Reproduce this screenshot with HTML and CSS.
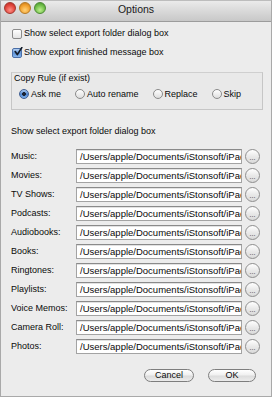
FILE: index.html
```html
<!DOCTYPE html>
<html>
<head>
<meta charset="utf-8">
<link rel="stylesheet" href="styles.css">
</head>
<body>
<div class="window">
  <div class="titlebar">
    <div class="lights">
      <span class="light red"></span>
      <span class="light orange"></span>
      <span class="light green"></span>
    </div>
    <div class="title">Options</div>
    <div></div>
  </div>
  <div class="content">
    <label class="check-row"><span class="check"></span><span>Show select export folder dialog box</span></label>
    <label class="check-row"><span class="check on"><svg viewBox="0 0 10 10" width="10" height="10"><path d="M2.2 4.6 L4.3 7.6 L8.8 0.6" fill="none" stroke="#141c28" stroke-width="1.7" stroke-linecap="round" stroke-linejoin="round"/></svg></span><span>Show export finished message box</span></label>

    <div class="group">
      <div class="group-title">Copy Rule (if exist)</div>
      <div class="radios">
        <span class="radio-item"><span class="radio on"></span>Ask me</span>
        <span class="radio-item"><span class="radio"></span>Auto rename</span>
        <span class="radio-item"><span class="radio"></span>Replace</span>
        <span class="radio-item"><span class="radio"></span>Skip</span>
      </div>
    </div>

    <div class="section-label">Show select export folder dialog box</div>

    <div class="rows">
      <div class="row"><span class="row-label">Music:</span><span class="field">/Users/apple/Documents/iStonsoft/iPad</span><span class="browse">...</span></div>
      <div class="row"><span class="row-label">Movies:</span><span class="field">/Users/apple/Documents/iStonsoft/iPad</span><span class="browse">...</span></div>
      <div class="row"><span class="row-label">TV Shows:</span><span class="field">/Users/apple/Documents/iStonsoft/iPad</span><span class="browse">...</span></div>
      <div class="row"><span class="row-label">Podcasts:</span><span class="field">/Users/apple/Documents/iStonsoft/iPad</span><span class="browse">...</span></div>
      <div class="row"><span class="row-label">Audiobooks:</span><span class="field">/Users/apple/Documents/iStonsoft/iPad</span><span class="browse">...</span></div>
      <div class="row"><span class="row-label">Books:</span><span class="field">/Users/apple/Documents/iStonsoft/iPad</span><span class="browse">...</span></div>
      <div class="row"><span class="row-label">Ringtones:</span><span class="field">/Users/apple/Documents/iStonsoft/iPad</span><span class="browse">...</span></div>
      <div class="row"><span class="row-label">Playlists:</span><span class="field">/Users/apple/Documents/iStonsoft/iPad</span><span class="browse">...</span></div>
      <div class="row"><span class="row-label">Voice Memos:</span><span class="field">/Users/apple/Documents/iStonsoft/iPad</span><span class="browse">...</span></div>
      <div class="row"><span class="row-label">Camera Roll:</span><span class="field">/Users/apple/Documents/iStonsoft/iPad</span><span class="browse">...</span></div>
      <div class="row"><span class="row-label">Photos:</span><span class="field">/Users/apple/Documents/iStonsoft/iPad</span><span class="browse">...</span></div>
    </div>

    <div class="buttons">
      <span class="btn cancel">Cancel</span>
      <span class="btn ok">OK</span>
    </div>
  </div>
</div>
</body>
</html>
```
FILE: styles.css
```css
html, body {
  margin: 0;
  padding: 0;
  background: #ffffff;
}
body {
  font-family: "Liberation Sans", Arial, sans-serif;
  font-size: 9px;
  color: #0a0a0a;
}
.window {
  box-sizing: border-box;
  width: 272px;
  height: 397px;
  border: 1px solid #a9a9a9;
  border-top-color: #bdbdbd;
  background: #ececec;
  display: flex;
  flex-direction: column;
}
.titlebar {
  box-sizing: border-box;
  height: 21px;
  border-bottom: 1px solid #9c9c9c;
  background: linear-gradient(#ebebeb, #d9d9d9 50%, #c8c8c8);
  display: grid;
  grid-template-columns: 1fr auto 1fr;
  align-items: start;
}
.lights {
  display: flex;
  gap: 3px;
  padding: 1px 0 0 3px;
}
.light {
  width: 12px;
  height: 12px;
  border-radius: 50%;
  box-sizing: border-box;
}
.red {
  background: radial-gradient(circle at 50% 70%, #ff8f85 0, #e2463d 55%, #b0271e 100%);
  border: 1px solid #a3372f;
}
.orange {
  background: radial-gradient(circle at 50% 70%, #ffd27a 0, #f2a12e 55%, #c0731a 100%);
  border: 1px solid #b57a25;
}
.green {
  background: radial-gradient(circle at 50% 70%, #bff08f 0, #72c04a 55%, #3f8c26 100%);
  border: 1px solid #4d8a34;
}
.title {
  font-size: 10.5px;
  line-height: 12px;
  padding-top: 2px;
  color: #1a1a1a;
}
.content {
  padding: 2px 8px 0 10px;
  display: flex;
  flex-direction: column;
}
.check-row {
  display: flex;
  align-items: center;
  height: 19px;
  margin-left: 1px;
  gap: 2px;
  line-height: 11px;
}
.check {
  box-sizing: border-box;
  width: 10px;
  height: 10px;
  border: 1px solid #8b8b8b;
  border-radius: 2px;
  background: linear-gradient(#ffffff, #e4e4e4);
  display: flex;
  position: relative;
}
.check.on {
  border-color: #4a6ea6;
  background: linear-gradient(#b6d2f4, #5f94d8 50%, #86b5ec);
}
.check svg {
  position: absolute;
  left: 0;
  top: -2px;
}
.group {
  margin-top: 10px;
  box-sizing: border-box;
  width: 252px;
  height: 38px;
  border: 1px solid #c6c6c6;
  border-top-color: #cfcfcf;
  background: #e9e9e9;
  padding-bottom: 6px;
}
.group-title {
  line-height: 11px;
  padding-left: 2px;
}
.radios {
  display: flex;
  align-items: center;
  height: 19px;
  padding-left: 7px;
  gap: 14px;
}
.radio-item {
  display: flex;
  align-items: center;
  gap: 2px;
}
.radio {
  box-sizing: border-box;
  width: 10px;
  height: 10px;
  border-radius: 50%;
  border: 1px solid #8b8b8b;
  background: linear-gradient(#ffffff, #dedede);
}
.radio.on {
  border-color: #3f5f93;
  background: radial-gradient(circle, #1a2333 0, #1a2333 1.6px, transparent 2.2px), linear-gradient(#a9c8ef, #4f86d0 55%, #7fb0ea);
}
.section-label {
  margin-top: 15px;
  line-height: 12px;
}
.rows {
  margin-top: 10px;
  display: flex;
  flex-direction: column;
}
.row {
  display: flex;
  align-items: center;
  height: 19px;
}
.row-label {
  flex: 0 0 65px;
  line-height: 11px;
}
.field {
  box-sizing: border-box;
  flex: 0 0 166px;
  height: 15px;
  border: 1px solid #a3a3a3;
  border-top-color: #8a8a8a;
  background: #ffffff;
  box-shadow: inset 0 1px 0 #e2e2e2;
  padding: 0 0 0 3px;
  font-size: 9.5px;
  line-height: 13px;
  white-space: nowrap;
  overflow: hidden;
  color: #0a0a0a;
}
.browse {
  box-sizing: border-box;
  margin-left: 3px;
  width: 15px;
  height: 15px;
  border-radius: 50%;
  border: 1px solid #8e8e8e;
  background: linear-gradient(#ffffff, #e9e9e9 50%, #dadada);
  font-size: 7px;
  line-height: 15px;
  text-align: center;
  color: #333;
}
.buttons {
  margin-top: 13px;
  display: flex;
  justify-content: flex-end;
  gap: 14px;
  padding-right: 7px;
}
.btn {
  box-sizing: border-box;
  height: 13px;
  border-radius: 7px;
  border: 1px solid #7e7e7e;
  background: linear-gradient(#ffffff, #f0f0f0 45%, #dcdcdc 55%, #ececec);
  line-height: 11px;
  text-align: center;
  color: #0a0a0a;
}
.cancel {
  width: 50px;
}
.ok {
  width: 48px;
}
```
